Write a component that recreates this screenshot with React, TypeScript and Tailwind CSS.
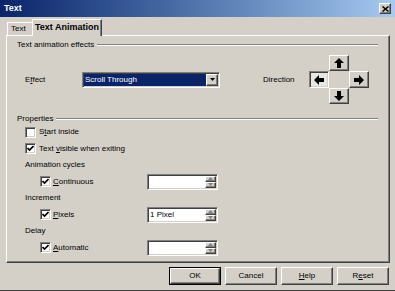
import React from "react";

const raised =
  "border border-t-white border-l-white border-b-[#404040] border-r-[#404040] shadow-[inset_-1px_-1px_0_#808080,inset_1px_1px_0_#d4d0c8]";
const sunken =
  "border border-t-[#808080] border-l-[#808080] border-b-white border-r-white shadow-[inset_1px_1px_0_#404040,inset_-1px_-1px_0_#d4d0c8]";

function Arrow({ dir }: { dir: "up" | "down" | "left" | "right" }) {
  const rot = { up: 0, right: 90, down: 180, left: 270 }[dir];
  return (
    <svg width="10" height="10" viewBox="0 0 10 10">
      <g transform={`rotate(${rot} 5 5)`}>
        <polygon points="5,0 10,5 7,5 7,10 3,10 3,5 0,5" fill="#000" />
      </g>
    </svg>
  );
}

function Check({ checked }: { checked: boolean }) {
  return (
    <span className={`flex items-center justify-center w-[11px] h-[11px] bg-white ${sunken}`}>
      {checked && (
        <svg width="7" height="7" viewBox="0 0 7 7">
          <polyline points="0.5,3 2.5,5 6.5,1" fill="none" stroke="#000" strokeWidth="1.6" />
        </svg>
      )}
    </span>
  );
}

function Spin({ value }: { value?: string }) {
  return (
    <div className={`flex w-[71px] h-[16px] bg-white ${sunken}`}>
      <span className="flex-1 pl-[2px] leading-[14px]">{value}</span>
      <div className="flex flex-col w-[11px] my-[1px] mr-[1px]">
        {[0, 1].map((i) => (
          <span key={i} className={`flex-1 flex items-center justify-center bg-[#d4d0c8] ${raised}`}>
            <svg width="5" height="3" viewBox="0 0 5 3">
              <polygon points={i === 0 ? "2.5,0 5,3 0,3" : "0,0 5,0 2.5,3"} fill="#808080" />
            </svg>
          </span>
        ))}
      </div>
    </div>
  );
}

function Header({ label }: { label: string }) {
  return (
    <div className="flex items-center h-[10px] gap-[3px]">
      <span>{label}</span>
      <span className="flex-1 h-[2px] border-t border-t-[#808080] border-b border-b-white" />
    </div>
  );
}

function Mn({ pre = "", ch, post = "" }: { pre?: string; ch: string; post?: string }) {
  return (
    <span>
      {pre}
      <span className="underline underline-offset-1">{ch}</span>
      {post}
    </span>
  );
}

export default function App() {
  const dirBtn = `flex items-center justify-center bg-[#d4d0c8] ${raised}`;
  return (
    <div className="w-[395px] h-[291px] bg-[#d4d0c8] flex flex-col text-[8px] text-black font-['Liberation_Sans',Arial,sans-serif] border-b border-b-[#404040] overflow-hidden">
      {/* title bar */}
      <div className="h-[17px] flex items-center justify-between pl-[4px] pr-[4px] bg-linear-to-r from-[#0a246a] to-[#a6caf0]">
        <span className="text-[9px] font-bold text-white">Text</span>
        <span className={`w-[12px] h-[11px] flex items-center justify-center bg-[#d4d0c8] ${raised}`}>
          <svg width="7" height="6" viewBox="0 0 7 6">
            <path d="M0.5 0.5 L6.5 5.5 M6.5 0.5 L0.5 5.5" stroke="#000" strokeWidth="1.5" />
          </svg>
        </span>
      </div>

      {/* tabs */}
      <div className="h-[18px] flex items-end pl-[7px]">
        <div className="h-[13px] w-[25px] border-t border-l border-t-white border-l-white flex items-center pl-[3px]">
          Text
        </div>
        <div className="relative z-10 -mb-px h-[17px] w-[70px] bg-[#d4d0c8] border-t border-l border-r border-t-white border-l-white border-r-[#404040] shadow-[inset_-1px_0_0_#808080] flex items-center pl-[2px] text-[9px] font-bold">
          Text Animation
        </div>
      </div>

      {/* panel */}
      <div className={`ml-[6px] w-[384px] h-[228px] pl-[10px] pr-[11px] pt-[4px] ${raised}`}>
        <Header label="Text animation effects" />

        <div className="mt-[5px] h-[49px] flex items-center">
          <span className="ml-[8px] w-[57px]">
            <Mn pre="E" ch="f" post="fect" />
          </span>
          <div className={`w-[138px] h-[16px] flex bg-white ${sunken}`}>
            <span className="flex-1 my-[1px] ml-[1px] bg-[#0a246a] text-white pl-[1px] leading-[12px]">
              Scroll Through
            </span>
            <span className={`w-[12px] my-[1px] mr-[1px] flex items-center justify-center bg-[#d4d0c8] ${raised}`}>
              <svg width="5" height="3" viewBox="0 0 5 3">
                <polygon points="0,0 5,0 2.5,3" fill="#000" />
              </svg>
            </span>
          </div>
          <span className="ml-[43px] w-[46px]">Direction</span>
          <div className="grid grid-cols-[20px_20px_20px] grid-rows-[16px_17px_16px]">
            <span />
            <span className={dirBtn}>
              <Arrow dir="up" />
            </span>
            <span />
            <span className={`flex items-center justify-center bg-[#e8e6e1] ${sunken}`}>
              <Arrow dir="left" />
            </span>
            <span />
            <span className={dirBtn}>
              <Arrow dir="right" />
            </span>
            <span />
            <span className={dirBtn}>
              <Arrow dir="down" />
            </span>
            <span />
          </div>
        </div>

        <div className="mt-[10px]">
          <Header label="Properties" />
        </div>

        <div className="flex flex-col">
          <div className="h-[16.5px] flex items-center ml-[8px] gap-[3px]">
            <Check checked={false} />
            <Mn pre="S" ch="t" post="art inside" />
          </div>
          <div className="h-[16.5px] flex items-center ml-[8px] gap-[3px]">
            <Check checked />
            <Mn pre="Text " ch="v" post="isible when exiting" />
          </div>
          <div className="h-[16.5px] flex items-center ml-[8px]">Animation cycles</div>
          <div className="h-[16.5px] flex items-center ml-[23px]">
            <span className="w-[107px] flex items-center gap-[2px]">
              <Check checked />
              <Mn ch="C" post="ontinuous" />
            </span>
            <Spin />
          </div>
          <div className="h-[16.5px] flex items-center ml-[8px]">Increment</div>
          <div className="h-[16.5px] flex items-center ml-[23px]">
            <span className="w-[107px] flex items-center gap-[2px]">
              <Check checked />
              <Mn ch="P" post="ixels" />
            </span>
            <Spin value="1 Pixel" />
          </div>
          <div className="h-[16.5px] flex items-center ml-[8px]">Delay</div>
          <div className="h-[16.5px] flex items-center ml-[23px]">
            <span className="w-[107px] flex items-center gap-[2px]">
              <Check checked />
              <Mn ch="A" post="utomatic" />
            </span>
            <Spin />
          </div>
        </div>
      </div>

      {/* buttons */}
      <div className="mt-[4px] flex justify-end gap-[4px] pr-[6px]">
        <button className="w-[52px] h-[18px] border border-black flex">
          <span className={`flex-1 flex items-center justify-center bg-[#d4d0c8] ${raised}`}>OK</span>
        </button>
        <button className={`w-[52px] h-[18px] flex items-center justify-center bg-[#d4d0c8] ${raised}`}>Cancel</button>
        <button className={`w-[52px] h-[18px] flex items-center justify-center bg-[#d4d0c8] ${raised}`}>
          <Mn ch="H" post="elp" />
        </button>
        <button className={`w-[52px] h-[18px] flex items-center justify-center bg-[#d4d0c8] ${raised}`}>
          <Mn pre="R" ch="e" post="set" />
        </button>
      </div>
    </div>
  );
}
